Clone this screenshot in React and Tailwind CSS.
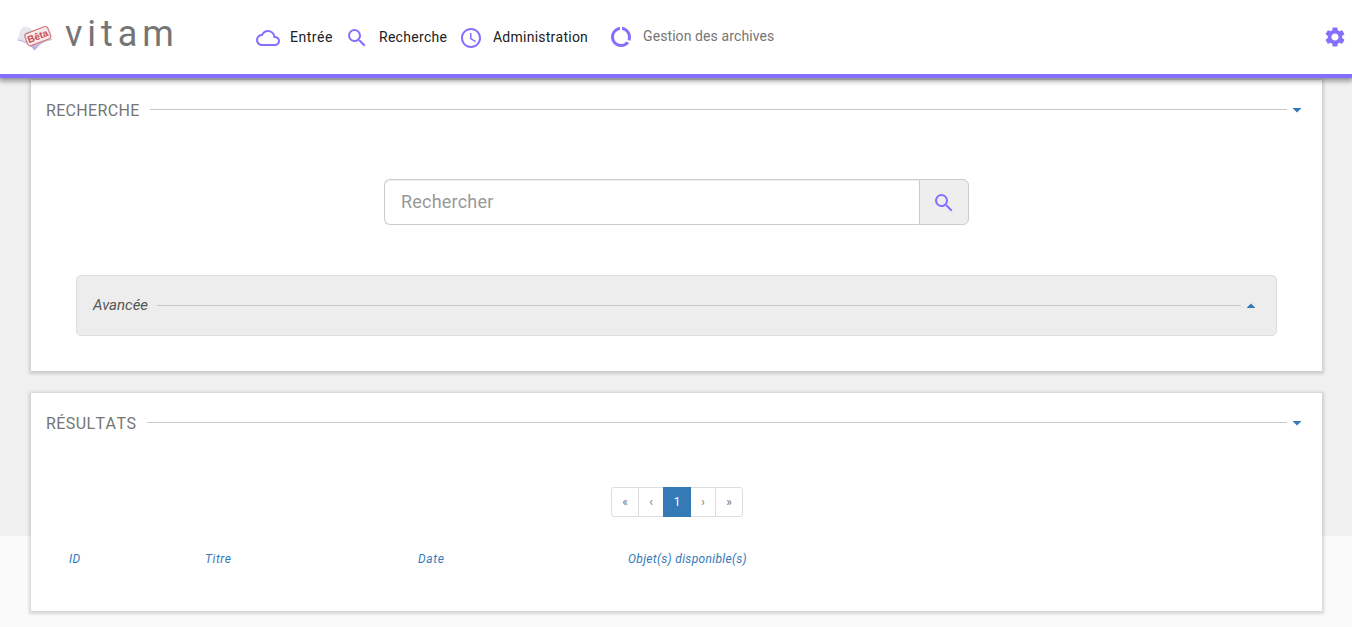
import React from "react";
import { MdCloudQueue, MdSearch, MdAccessTime, MdDataUsage, MdSettings } from "react-icons/md";

function Logo() {
  return (
    <svg width="36" height="28" viewBox="0 0 36 28" className="block">
      <defs>
        <linearGradient id="page" x1="0" y1="0" x2="0" y2="1">
          <stop offset="0" stopColor="#e6e8ea" />
          <stop offset="0.6" stopColor="#e4e1f2" />
          <stop offset="1" stopColor="#a9a0d6" />
        </linearGradient>
      </defs>
      <path d="M2 11 Q3 3 8 2.500 Q14 3 17 8 Q22 2 29 3 L35 16 Q25 17 17.500 26.500 Q11 18 .5 16.500Z" fill="url(#page)" />
      <path d="M.5 16Q11 17 17.500 25Q24 16.500 35 15.500" fill="none" stroke="#b5aede" strokeWidth="1" opacity=".8" />
      <g transform="rotate(-21 21 12)">
        <rect x="8.500" y="5.600" width="24.500" height="13" rx="3" fill="#f8e9ea" stroke="#d4777a" strokeWidth="1.200" />
        <text x="20.700" y="15.600" textAnchor="middle" fontSize="9.800" fontWeight="700" fill="#c94b50" fontFamily="Liberation Sans, Arial, sans-serif">Bêta</text>
      </g>
    </svg>
  );
}

function Caret({ up = false, className = "" }) {
  return (
    <svg width="8" height="5" viewBox="0 0 8 5" className={`block shrink-0 ${className}`} fill="#337ab7">
      <path d={up ? "M0 5V4.500L4 .5L8 4.500V5Z" : "M0 0H8V.5L4 4.500L0 .5Z"} />
    </svg>
  );
}

function NavItem({ icon: Icon, label, className }) {
  return (
    <a className={`flex items-center gap-[10px] text-[14px] leading-5 ${className}`}>
      <Icon size={24} className="shrink-0 text-[#8470ff]" />
      <span className="-mt-[2px] [font-kerning:none]">{label}</span>
    </a>
  );
}

function PanelTitle({ children, className }) {
  return (
    <div className="flex h-[41px] items-center pt-[18px] pr-[21px] pl-[15px]">
      <h2 className={`mt-[2px] shrink-0 text-[16px] leading-6 text-[#757575] [font-kerning:none] ${className}`}>{children}</h2>
      <div className="mr-[6px] h-px flex-1 bg-[#c8c8c8]" />
      <Caret className="mt-[2px]" />
    </div>
  );
}

const CARD = "mx-[31px] w-[1291px] bg-white shadow-[0_1px_3px_2px_rgba(0,0,0,0.14)]";

export default function App() {
  return (
    <div className="h-[627px] w-[1352px] overflow-hidden bg-[#fafafa] font-['Roboto',sans-serif]">
      <header className="relative z-10 flex h-[78px] items-start border-b-4 border-[#8470ff] bg-white shadow-[0_2px_5px_1px_rgba(0,0,0,0.4)]">
        <div className="mt-[24px] ml-[17px]"><Logo /></div>
        <div className="mt-[10px] ml-[12px] w-[191px] text-[36px] leading-[48px] tracking-[4.900px] text-[#757575]">vitam</div>
        <nav className="flex items-start">
          <NavItem icon={MdCloudQueue} label="Entrée" className="mt-[26px] w-[89px] tracking-[0.500px] text-[#212121]" />
          <NavItem icon={MdSearch} label="Recherche" className="mt-[26px] w-[114px] tracking-[0.280px] text-[#212121]" />
          <NavItem icon={MdAccessTime} label="Administration" className="mt-[26px] w-[150px] tracking-[0.240px] text-[#212121]" />
          <NavItem icon={MdDataUsage} label="Gestion des archives" className="mt-[25px] tracking-[0.090px] text-[#757575]" />
        </nav>
        <MdSettings size={24} className="mt-[25px] mr-[5px] ml-auto text-[#8470ff]" />
      </header>

      <main className="h-[458px] bg-[#f0f0f0] pt-[2px]">
        <section className={`${CARD} h-[291px]`}>
          <PanelTitle className="w-[104px] tracking-[0.330px]">RECHERCHE</PanelTitle>
          <div className="mt-[58px] ml-[353px] flex h-[46px] w-[585px]">
            <input
              placeholder="Rechercher"
              className="w-[535px] rounded-l-[6px] border border-r-0 border-[#ccc] bg-white px-4 pb-[2px] text-[18px] tracking-[0.200px] shadow-[inset_0_1px_1px_rgba(0,0,0,0.075)] outline-none placeholder:text-[#999]"
            />
            <button className="flex w-[50px] items-center justify-center rounded-r-[6px] border border-[#ccc] bg-[#eee] pt-[2px] pr-[1px]">
              <MdSearch size={24} className="text-[#8470ff]" />
            </button>
          </div>
          <div className="mt-[50px] ml-[45px] flex h-[61px] w-[1201px] items-center rounded-[5px] border border-[#ddd] bg-[#ededed] pr-[21px] pl-[16px]">
            <span className="w-[64px] shrink-0 text-[15px] text-[#555] italic">Avancée</span>
            <div className="mr-[6px] h-px flex-1 bg-[#c8c8c8]" />
            <Caret up />
          </div>
        </section>

        <section className={`${CARD} mt-[22px] h-[218px]`}>
          <PanelTitle className="w-[101px] tracking-[0.430px]">RÉSULTATS</PanelTitle>
          <div className="mt-[53px] ml-[580px] flex h-[30px] w-[132px] text-[12px] leading-[28px] text-[#757575]">
            <a className="w-[28px] rounded-l-[3px] border border-[#ddd] text-center">«</a>
            <a className="w-[24px] border-y border-[#ddd] text-center">‹</a>
            <a className="w-[28px] border border-[#337ab7] bg-[#337ab7] text-center text-white">1</a>
            <a className="w-[24px] border-y border-[#ddd] text-center">›</a>
            <a className="w-[28px] rounded-r-[3px] border border-[#ddd] text-center">»</a>
          </div>
          <div className="mt-[33px] ml-[38px] grid grid-cols-[136px_213px_210px_200px] text-[12px] leading-[18px] tracking-[0.330px] text-[#337ab7] italic [font-kerning:none]">
            <span>ID</span>
            <span className="tracking-[0.580px]">Titre</span>
            <span className="tracking-[0.630px]">Date</span>
            <span>Objet(s) disponible(s)</span>
          </div>
        </section>
      </main>
    </div>
  );
}
